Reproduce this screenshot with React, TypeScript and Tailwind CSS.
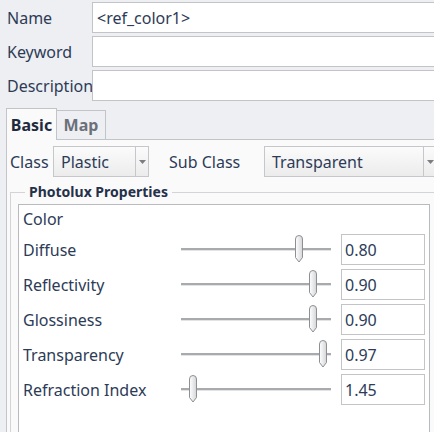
import React from 'react';

// ============================================
// MATERIAL EDITOR PANEL
// ============================================

const fields = [
  { label: 'Name', value: '<ref_color1>' },
  { label: 'Keyword', value: '' },
  { label: 'Description', value: '' },
];

const sliders = [
  { label: 'Diffuse', value: '0.80', frac: 0.8 },
  { label: 'Reflectivity', value: '0.90', frac: 0.9 },
  { label: 'Glossiness', value: '0.90', frac: 0.9 },
  { label: 'Transparency', value: '0.97', frac: 0.97 },
  { label: 'Refraction Index', value: '1.45', frac: 0.056 },
];

function Arrow() {
  return (
    <svg width="7" height="4" viewBox="0 0 7 4">
      <path d="M0 0 H7 L3.5 4 Z" fill="#7b7d80" />
    </svg>
  );
}

function Combo({ text, width, textWidth }: { text: string; width: string; textWidth: string }) {
  return (
    <div className={`flex h-[31px] shrink-0 border border-[#c6c7ca] bg-gradient-to-b from-[#fbfbfb] to-[#ececed] ${width}`}>
      <div className={`flex shrink-0 items-center pl-[7px] text-[#2d3b57] ${textWidth}`}>{text}</div>
      <div className="flex w-[13px] shrink-0 items-center justify-center border-l border-[#c6c7ca]">
        <Arrow />
      </div>
    </div>
  );
}

function Thumb() {
  return (
    <svg width="10" height="28" viewBox="0 0 10 28">
      <defs>
        <linearGradient id="thumbFill" x1="0" y1="0" x2="1" y2="0">
          <stop offset="0" stopColor="#ffffff" />
          <stop offset="1" stopColor="#d4d5d8" />
        </linearGradient>
      </defs>
      <path
        d="M1.5 4 Q1.5 0.5 5 0.5 Q8.5 0.5 8.5 4 L8.5 22.5 L5 27 L1.5 22.5 Z"
        fill="url(#thumbFill)"
        stroke="#8d8f93"
        strokeWidth="1"
      />
    </svg>
  );
}

function Slider({ frac }: { frac: number }) {
  return (
    <div className="relative flex h-full w-[150px] shrink-0 items-center">
      <div className="h-[3px] w-full border-t-2 border-b border-t-[#a9aaad] border-b-[#e2e3e5]" />
      <div className="absolute top-[3px]" style={{ left: 4 + frac * 142 - 5 }}>
        <Thumb />
      </div>
    </div>
  );
}

export default function App() {
  return (
    <div className="h-[432px] w-[434px] overflow-hidden bg-[#eeeff2] font-['Noto_Sans',sans-serif] text-[16px] text-[#2d3b57]">
      {/* Header fields */}
      <div className="flex flex-col gap-[3px] pt-[2px]">
        {fields.map((f) => (
          <div key={f.label} className="flex h-[31px] items-center">
            <div className="w-[92px] shrink-0 pl-[7px]">{f.label}</div>
            <input
              readOnly
              value={f.value}
              className="h-[31px] w-[360px] shrink-0 border border-[#c3c4c7] bg-white pl-[4px] text-[#2d3b57] outline-none"
            />
          </div>
        ))}
      </div>

      {/* Tabs */}
      <div className="ml-[6px] mt-[7px] flex items-end">
        <div className="relative z-10 -mb-px flex h-[32px] w-[51px] items-center justify-center border border-b-0 border-[#c3c4c7] bg-[#fafafa] font-bold text-[#1f2a3e]">
          Basic
        </div>
        <div className="flex h-[29px] w-[49px] items-center justify-center border border-l-0 border-b-0 border-[#c3c4c7] bg-[#eeeff2] font-bold text-[#6b707b]">
          Map
        </div>
      </div>

      {/* Tab panel */}
      <div className="ml-[6px] h-[300px] border-t border-l border-[#c3c4c7] bg-[#fafafa] pt-[6px]">
        <div className="flex items-center">
          <div className="w-[46px] shrink-0 pl-[3px]">Class</div>
          <Combo text="Plastic" width="w-[96px]" textWidth="w-[81px]" />
          <div className="ml-[20px] w-[95px] shrink-0">Sub Class</div>
          <Combo text="Transparent" width="w-[190px]" textWidth="w-[158px]" />
        </div>

        <fieldset className="ml-[3px] mt-[4px] border-t border-l border-[#d3d4d7] pl-[7px] pt-[1px]">
          <legend className="ml-[7px] px-[4px] text-[14px] leading-[22px] font-bold text-[#25314a]">
            Photolux Properties
          </legend>
          <div className="h-[240px] w-[412px] border border-[#b9babd] bg-white pl-[4px]">
            <div className="flex h-[27px] items-center">Color</div>
            {sliders.map((s) => (
              <div key={s.label} className="flex h-[35px] items-center">
                <div className="w-[158px] shrink-0">{s.label}</div>
                <Slider frac={s.frac} />
                <div className="ml-[10px] flex h-[31px] w-[84px] shrink-0 items-center border border-[#c3c4c7] bg-white pl-[3px]">
                  {s.value}
                </div>
              </div>
            ))}
          </div>
        </fieldset>
      </div>
    </div>
  );
}
